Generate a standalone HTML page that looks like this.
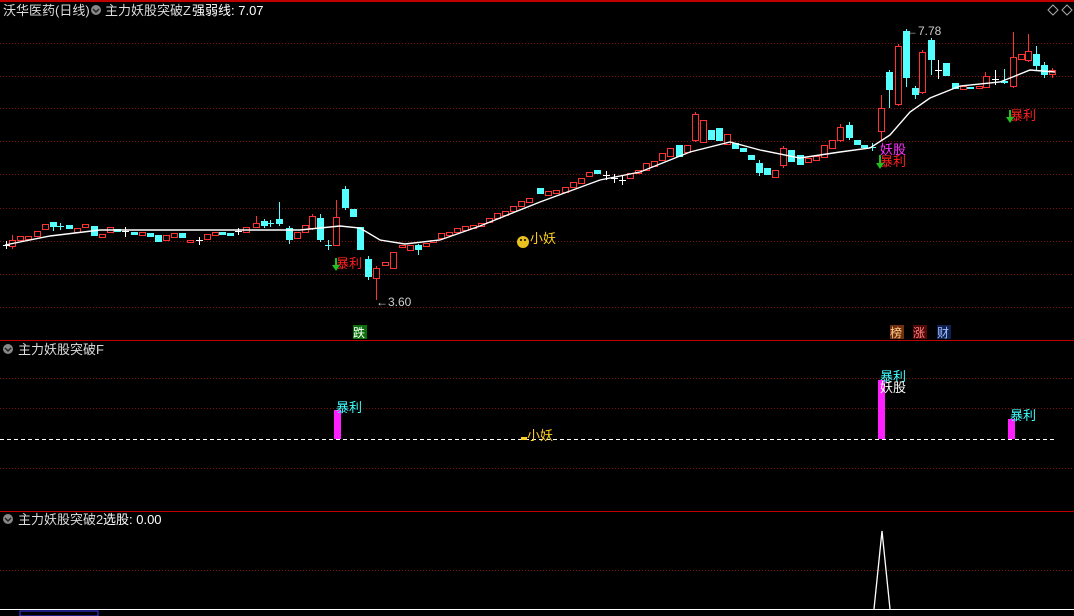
<!DOCTYPE html>
<html><head><meta charset="utf-8"><style>
body{margin:0;background:#000;width:1074px;height:616px;overflow:hidden}
svg{display:block}
text{font-family:"Liberation Sans","Noto Sans CJK SC",sans-serif}
</style></head><body>
<svg width="1074" height="616" viewBox="0 0 1074 616">
<rect width="1074" height="616" fill="#000"/>
<rect x="0" y="0" width="1074" height="2" fill="#c00000"/>
<g stroke="#7a1010" stroke-dasharray="1,2" stroke-width="1">
<line x1="0" x2="1074" y1="43.5" y2="43.5"/><line x1="0" x2="1074" y1="76.5" y2="76.5"/>
<line x1="0" x2="1074" y1="108.5" y2="108.5"/><line x1="0" x2="1074" y1="141.5" y2="141.5"/>
<line x1="0" x2="1074" y1="174.5" y2="174.5"/><line x1="0" x2="1074" y1="208.5" y2="208.5"/>
<line x1="0" x2="1074" y1="241.5" y2="241.5"/><line x1="0" x2="1074" y1="274.5" y2="274.5"/>
<line x1="0" x2="1074" y1="307.5" y2="307.5"/>
<line x1="0" x2="1074" y1="378.5" y2="378.5"/><line x1="0" x2="1074" y1="408.5" y2="408.5"/>
<line x1="0" x2="1074" y1="468.5" y2="468.5"/><line x1="0" x2="1074" y1="570.5" y2="570.5"/>
</g>
<line x1="0" x2="1074" y1="340.5" y2="340.5" stroke="#c00000"/>
<line x1="0" x2="1074" y1="511.5" y2="511.5" stroke="#c00000"/>
<line x1="0" x2="1056" y1="439.5" y2="439.5" stroke="#fff" stroke-dasharray="4,3"/>
<line x1="0" x2="1074" y1="609.5" y2="609.5" stroke="#fff"/>
<rect x="20" y="611" width="78" height="5" fill="none" stroke="#3a3aff"/>

<!-- wicks -->
<path stroke="#ff3232" fill="none" d="M12.5 235V249M256.5 216V228M312.5 214V230M336.5 200V246M376.5 266V300M695.5 112V142M783.5 146V168M840.5 124V142M881.5 95V140M898.5 44V106M922.5 50V94M1013.5 32V88M1028.5 34V62M1052.5 68V78M985.5 72V88"/>
<path stroke="#54ffff" fill="none" d="M53.5 222V231M279.5 202V226M264.5 219V228M345.5 186V210M368.5 256V280M418.5 244V255M889.5 70V108M906.5 29V87M915.5 86V99M931.5 38V75M1004.5 69V84M1036.5 46V70M1044.5 62V78M759.5 160V176M849.5 122V140M289.5 226V244M320.5 214V242"/>
<!-- red hollow bodies -->
<path stroke="#ff3232" fill="#000" d="M9.5 240.5h6v6h-6zM17.5 236.5h6v4h-6zM25.5 236.5h6v3h-6zM34.5 231.5h6v5h-6zM42.5 224.5h6v5h-6zM74.5 228.5h6v4h-6zM82.5 224.5h6v3h-6zM99.5 234.5h6v3h-6zM107.5 227.5h6v5h-6zM139.5 232.5h6v3h-6zM163.5 235.5h6v5h-6zM171.5 233.5h6v4h-6zM187.5 240.5h6v2h-6zM204.5 234.5h6v5h-6zM212.5 232.5h6v3h-6zM243.5 227.5h6v5h-6zM253.5 223.5h6v4h-6zM294.5 232.5h6v6h-6zM302.5 225.5h6v7h-6zM309.5 216.5h6v12h-6zM333.5 217.5h6v28h-6zM373.5 268.5h6v10h-6zM382.5 262.5h6v3h-6zM390.5 252.5h6v16h-6zM399.5 245.5h6v2h-6zM407.5 245.5h6v5h-6zM423.5 243.5h6v3h-6zM430.5 240.5h6v2h-6zM438.5 233.5h6v5h-6zM446.5 232.5h6v3h-6zM454.5 228.5h6v4h-6zM462.5 226.5h6v4h-6zM470.5 225.5h6v3h-6zM478.5 223.5h6v3h-6zM486.5 218.5h6v4h-6zM494.5 213.5h6v5h-6zM502.5 211.5h6v4h-6zM510.5 206.5h6v5h-6zM518.5 201.5h6v5h-6zM526.5 198.5h6v4h-6zM545.5 191.5h6v4h-6zM553.5 190.5h6v3h-6zM562.5 187.5h6v5h-6zM570.5 182.5h6v5h-6zM578.5 178.5h6v5h-6zM586.5 172.5h6v4h-6zM627.5 173.5h6v5h-6zM635.5 170.5h6v3h-6zM643.5 163.5h6v7h-6zM651.5 161.5h6v5h-6zM659.5 153.5h6v7h-6zM667.5 148.5h6v8h-6zM684.5 145.5h6v7h-6zM692.5 114.5h6v26h-6zM700.5 120.5h6v22h-6zM724.5 134.5h6v10h-6zM772.5 170.5h6v7h-6zM780.5 148.5h6v17h-6zM805.5 158.5h6v4h-6zM813.5 156.5h6v4h-6zM821.5 145.5h6v12h-6zM829.5 140.5h6v8h-6zM837.5 127.5h6v13h-6zM878.5 108.5h6v23h-6zM895.5 46.5h6v58h-6zM919.5 52.5h6v40h-6zM960.5 86.5h6v3h-6zM976.5 86.5h6v2h-6zM983.5 76.5h6v11h-6zM1010.5 57.5h6v29h-6zM1018.5 54.5h6v5h-6zM1025.5 51.5h6v9h-6zM1049.5 70.5h6v4h-6z"/>
<!-- cyan bodies -->
<path fill="#54ffff" d="M50 222h7v5h-7zM66 225h7v4h-7zM91 226h7v10h-7zM114 229h7v3h-7zM131 232h7v3h-7zM147 233h7v4h-7zM155 235h7v7h-7zM179 233h7v5h-7zM219 232h7v3h-7zM227 233h7v3h-7zM261 221h7v5h-7zM276 219h7v5h-7zM286 228h7v12h-7zM317 218h7v22h-7zM342 189h7v19h-7zM350 209h7v8h-7zM357 227h7v23h-7zM365 259h7v18h-7zM415 245h7v5h-7zM537 188h7v6h-7zM594 170h7v4h-7zM676 145h7v12h-7zM708 130h7v10h-7zM716 128h7v13h-7zM732 143h7v6h-7zM740 148h7v4h-7zM748 155h7v5h-7zM756 163h7v10h-7zM764 168h7v7h-7zM788 150h7v12h-7zM797 155h7v10h-7zM846 125h7v13h-7zM854 140h7v5h-7zM861 145h7v3h-7zM886 72h7v18h-7zM903 31h7v47h-7zM912 88h7v7h-7zM928 40h7v20h-7zM943 63h7v13h-7zM952 83h7v6h-7zM967 87h7v2h-7zM1001 81h7v2h-7zM1033 54h7v12h-7zM1041 65h7v10h-7z"/>
<!-- crosses -->
<path stroke="#fff" fill="none" d="M3 245.5h7M6.5 241V249M122 231.5h7M125.5 227V237M196 240.5h7M199.5 237V245M235 231.5h7M238.5 228V235M603 175.5h7M606.5 171V180M611 178.5h7M614.5 174V183M619 180.5h7M622.5 176V185M935 70.5h7M938.5 60V79M992 79.5h7M995.5 70V85"/>
<path stroke="#54ffff" fill="none" d="M57 226.5h7M60.5 223V230M267 223.5h7M270.5 220V227M325 245.5h7M328.5 240V250M869 147.5h7M872.5 143V151"/>

<polyline fill="none" stroke="#fff" stroke-width="1.4" points="5,245 50,236 100,230 200,230 300,230 340,226 360,228 380,240 405,244 440,240 480,226 540,202 600,180 640,172 690,152 730,142 760,150 800,158 840,152 870,148 890,135 910,112 930,98 960,86 1000,82 1030,70 1055,72"/>

<!-- headers -->
<text x="3" y="15" fill="#ddd" font-size="13">沃华医药(日线)</text>
<circle cx="96" cy="10" r="5" fill="#888"/><path d="M93 9l3 3 3-3" stroke="#222" fill="none" stroke-width="1.5"/>
<text x="105" y="15" fill="#ddd" font-size="13">主力妖股突破Z</text>
<text x="192" y="15" fill="#fff" font-size="13">强弱线: 7.07</text>
<path d="M1053 5l5 5-5 5-5-5z M1067 5l5 5-5 5-5-5z" fill="none" stroke="#aaa"/>
<circle cx="8" cy="349" r="5" fill="#888"/><path d="M5 348l3 3 3-3" stroke="#222" fill="none" stroke-width="1.5"/>
<text x="18" y="354" fill="#ddd" font-size="13">主力妖股突破F</text>
<circle cx="8" cy="519" r="5" fill="#888"/><path d="M5 518l3 3 3-3" stroke="#222" fill="none" stroke-width="1.5"/>
<text x="18" y="524" fill="#ddd" font-size="13">主力妖股突破2</text>
<text x="103" y="524" fill="#fff" font-size="13">选股: 0.00</text>
<!-- markers main -->
<text x="336" y="268" fill="#ff2020" font-size="13">暴利</text>
<path d="M332 265h8l-4 6z M335 258h2v8h-2z" fill="#20c020"/>
<text x="376" y="306" fill="#ccc" font-size="12">←3.60</text>
<circle cx="523" cy="242" r="6" fill="#e8c020"/><circle cx="521" cy="240" r="1" fill="#000"/><circle cx="525" cy="240" r="1" fill="#000"/>
<text x="530" y="243" fill="#ffd020" font-size="13">小妖</text>
<text x="906" y="35" fill="#ccc" font-size="12">←7.78</text>
<text x="880" y="154" fill="#ff30ff" font-size="13">妖股</text>
<text x="880" y="166" fill="#ff2020" font-size="13">暴利</text>
<path d="M876 163h8l-4 6z M879 155h2v9h-2z" fill="#20c020"/>
<text x="1010" y="120" fill="#ff2020" font-size="13">暴利</text>
<path d="M1006 117h8l-4 6z M1009 110h2v8h-2z" fill="#20c020"/>
<rect x="353" y="325" width="14" height="14" fill="#0a700a"/><text x="353" y="337" fill="#fff" font-size="12">跌</text>
<rect x="890" y="325" width="14" height="14" fill="#703010"/><text x="890" y="337" fill="#ffcc88" font-size="12">榜</text>
<rect x="913" y="325" width="14" height="14" fill="#500808"/><text x="913" y="337" fill="#ff8080" font-size="12">涨</text>
<rect x="937" y="325" width="14" height="14" fill="#102050"/><text x="937" y="337" fill="#a0c0ff" font-size="12">财</text>
<!-- panel 2 -->
<rect x="334" y="410" width="7" height="29" fill="#ff20ff"/>
<rect x="878" y="380" width="7" height="59" fill="#ff20ff"/>
<rect x="1008" y="419" width="7" height="20" fill="#ff20ff"/>
<text x="336" y="412" fill="#40ffff" font-size="13">暴利</text>
<text x="880" y="381" fill="#40ffff" font-size="13">暴利</text>
<text x="880" y="392" fill="#fff" font-size="13">妖股</text>
<text x="1010" y="420" fill="#40ffff" font-size="13">暴利</text>
<rect x="521" y="437" width="6" height="3" fill="#ffd020"/>
<text x="527" y="440" fill="#ffd020" font-size="13">小妖</text>
<!-- panel 3 -->
<polyline points="874,609 882,531 890,609" fill="none" stroke="#fff" stroke-width="1.3"/>
</svg>
</body></html>
